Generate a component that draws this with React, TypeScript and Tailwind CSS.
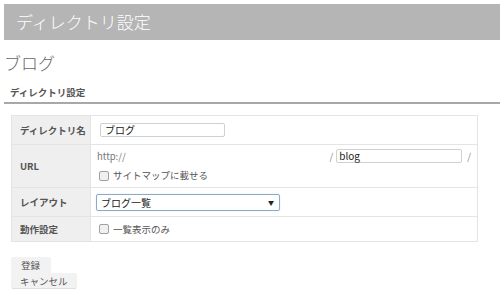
const font = { fontFamily: '"Noto Sans CJK JP", "Liberation Sans", sans-serif' };

const Check = ({ label }: { label: string }) => (
  <label className="flex items-center gap-[4px] text-[9.5px] text-[#555]">
    <span className="block w-[10px] h-[10px] border border-[#a0a0a0] rounded-[2px] bg-[#f0f0f0]" />
    {label}
  </label>
);

const App = () => {
  return (
    <div
      className="w-[500px] h-[299px] bg-white overflow-hidden"
      style={{ fontFamily: '"Noto Sans CJK JP", "Liberation Sans", sans-serif' }}
    >
      <div className="pt-[4px] pl-[4px]">
        <div className="h-[36px] bg-[#b5b5b5] flex items-center pl-[12px] text-white text-[17px] font-light">
          ディレクトリ設定
        </div>
      </div>
      <div className="pl-[4px] pt-[12px] h-[36px] text-[17px] leading-[22px] font-light text-[#666]">ブログ</div>
      <div className="ml-[4px] h-[28px] pl-[6px] pb-[3px] flex items-end border-b-2 border-[#a8a8a8] text-[9.5px] font-bold text-[#555] leading-[14px]">
        ディレクトリ設定
      </div>
      <table className="ml-[11px] mt-[11px] w-[467px] border-collapse text-[9.5px] text-[#555]" style={font}>
        <tbody>
          <tr className="h-[29px]">
            <th className="w-[79px] bg-[#efefef] border border-[#e4e4e4] text-left font-bold pl-[8px]">ディレクトリ名</th>
            <td className="border border-[#e4e4e4] pl-[9px]">
              <div className="w-[125px] h-[14px] border border-[#d0d0d0] rounded-[2px] pl-[4px] leading-[12px] text-[10px] text-[#222]">
                ブログ
              </div>
            </td>
          </tr>
          <tr className="h-[43px]">
            <th className="bg-[#efefef] border border-[#e4e4e4] text-left font-bold pl-[8px]">URL</th>
            <td className="border border-[#e4e4e4] pl-[6px] pr-[6px]">
              <div className="flex items-center h-[14px]">
                <span className="text-[#777]">http://</span>
                <span className="ml-auto text-[#888] mr-[3px]">/</span>
                <div className="w-[126px] h-[14px] border border-[#d0d0d0] rounded-[2px] pl-[2px] leading-[12px] text-[10px] text-[#222]">
                  blog
                </div>
                <span className="ml-[5px] text-[#888]">/</span>
              </div>
              <div className="mt-[5px] pl-[2px]">
                <Check label="サイトマップに載せる" />
              </div>
            </td>
          </tr>
          <tr className="h-[29px]">
            <th className="bg-[#efefef] border border-[#e4e4e4] text-left font-bold pl-[8px]">レイアウト</th>
            <td className="border border-[#e4e4e4] pl-[5px]">
              <div className="w-[184px] h-[17px] border border-[#8fa9c8] rounded-[2px] flex items-center pl-[4px] pr-[5px] text-[10px] text-[#222] shadow-[0_0_1px_#9fc0e6]">
                ブログ一覧
                <span className="ml-auto text-[6px]">▼</span>
              </div>
            </td>
          </tr>
          <tr className="h-[25px]">
            <th className="bg-[#efefef] border border-[#e4e4e4] text-left font-bold pl-[8px]">動作設定</th>
            <td className="border border-[#e4e4e4] pl-[8px]">
              <Check label="一覧表示のみ" />
            </td>
          </tr>
        </tbody>
      </table>
      <div className="ml-[11px] mt-[15px] flex flex-col items-start text-[9.5px] text-[#555]">
        <button className="h-[16px] pl-[10px] pr-[11px] bg-[#f2f2f2] leading-[16px] rounded-t-[2px]">登録</button>
        <button className="h-[16px] px-[9px] bg-[#f2f2f2] leading-[16px] rounded-[2px] border-b border-[#e0e0e0]">
          キャンセル
        </button>
      </div>
    </div>
  );
};

export default App;
